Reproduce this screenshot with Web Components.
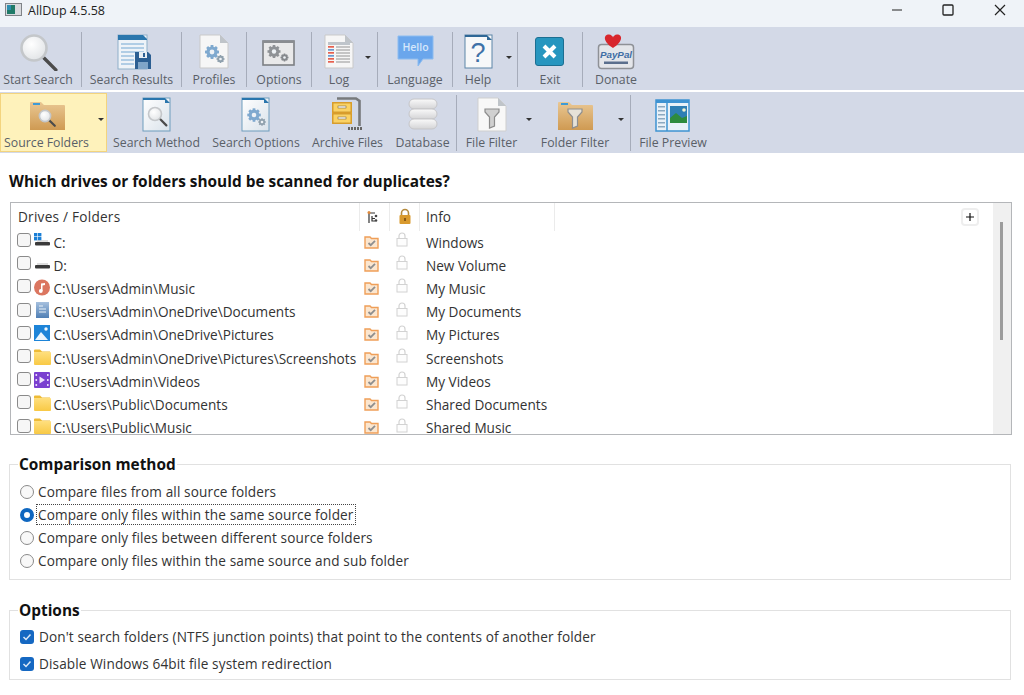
<!DOCTYPE html>
<html lang="en">
<head>
<meta charset="utf-8">
<title>AllDup 4.5.58</title>
<style>
html,body{margin:0;padding:0;background:#fff;overflow:hidden}
body{font-family:"Open Sans","Noto Sans",sans-serif;width:1024px;height:695px}
</style>
</head>
<body>
<app-titlebar>AllDup 4.5.58</app-titlebar>
<app-toolbar row="1">
  <tool-button w="76" style="margin-right:5px"><app-icon slot="icon" name="search"></app-icon>Start Search</tool-button>
  <tool-sep></tool-sep>
  <tool-button w="99"><app-icon slot="icon" name="results"></app-icon>Search Results</tool-button>
  <tool-sep></tool-sep>
  <tool-button w="64"><app-icon slot="icon" name="profiles"></app-icon>Profiles</tool-button>
  <tool-sep></tool-sep>
  <tool-button w="64"><app-icon slot="icon" name="options"></app-icon>Options</tool-button>
  <tool-sep></tool-sep>
  <tool-button w="65" shift="11" arrow="6"><app-icon slot="icon" name="log"></app-icon>Log</tool-button>
  <tool-sep></tool-sep>
  <tool-button w="74"><app-icon slot="icon" name="hello"></app-icon>Language</tool-button>
  <tool-sep></tool-sep>
  <tool-button w="64" shift="14" arrow="5"><app-icon slot="icon" name="help"></app-icon>Help</tool-button>
  <tool-sep></tool-sep>
  <tool-button w="64"><app-icon slot="icon" name="exit"></app-icon>Exit</tool-button>
  <tool-sep></tool-sep>
  <tool-button w="66"><app-icon slot="icon" name="paypal"></app-icon>Donate</tool-button>
</app-toolbar>
<app-toolbar row="2">
  <tool-button w="107" shift="14" arrow="3" active><app-icon slot="icon" name="folderSearch"></app-icon>Source Folders</tool-button>
  <tool-button w="99"><app-icon slot="icon" name="docSearch"></app-icon>Search Method</tool-button>
  <tool-button w="100"><app-icon slot="icon" name="docGears"></app-icon>Search Options</tool-button>
  <tool-button w="83"><app-icon slot="icon" name="archive"></app-icon>Archive Files</tool-button>
  <tool-button w="67"><app-icon slot="icon" name="database"></app-icon>Database</tool-button>
  <tool-sep></tool-sep>
  <tool-button w="78" shift="9" arrow="3"><app-icon slot="icon" name="fileFilter"></app-icon>File Filter</tool-button>
  <tool-button w="95" shift="15" arrow="6"><app-icon slot="icon" name="folderFilter"></app-icon>Folder Filter</tool-button>
  <tool-sep></tool-sep>
  <tool-button w="84"><app-icon slot="icon" name="preview"></app-icon>File Preview</tool-button>
</app-toolbar>
<app-main>
  <h-title>Which drives or folders should be scanned for duplicates?</h-title>
  <folder-list>
    <folder-row icon="driveWin" info="Windows">C:</folder-row>
    <folder-row icon="drive" info="New Volume">D:</folder-row>
    <folder-row icon="music" info="My Music">C:\Users\Admin\Music</folder-row>
    <folder-row icon="docs" info="My Documents">C:\Users\Admin\OneDrive\Documents</folder-row>
    <folder-row icon="pics" info="My Pictures">C:\Users\Admin\OneDrive\Pictures</folder-row>
    <folder-row icon="folder" info="Screenshots">C:\Users\Admin\OneDrive\Pictures\Screenshots</folder-row>
    <folder-row icon="video" info="My Videos">C:\Users\Admin\Videos</folder-row>
    <folder-row icon="folder" info="Shared Documents">C:\Users\Public\Documents</folder-row>
    <folder-row icon="folder" info="Shared Music">C:\Users\Public\Music</folder-row>
  </folder-list>
  <group-box legend="Comparison method" style="margin-top:18px;height:127px" pad="5">
    <radio-row>Compare files from all source folders</radio-row>
    <radio-row checked>Compare only files within the same source folder</radio-row>
    <radio-row>Compare only files between different source folders</radio-row>
    <radio-row>Compare only files within the same source and sub folder</radio-row>
  </group-box>
  <group-box legend="Options" style="margin-top:19px;height:81px" pad="2">
    <check-row>Don't search folders (NTFS junction points) that point to the contents of another folder</check-row>
    <check-row>Disable Windows 64bit file system redirection</check-row>
  </group-box>
</app-main>
<script>
const gear=(cx,cy,r,c)=>{let t='';for(let i=0;i<8;i++){const a=i*Math.PI/4;t+=`<line x1="${cx}" y1="${cy}" x2="${(cx+Math.cos(a)*r*1.25).toFixed(1)}" y2="${(cy+Math.sin(a)*r*1.25).toFixed(1)}" stroke="${c}" stroke-width="${(r*.5).toFixed(1)}"/>`}
return t+`<circle cx="${cx}" cy="${cy}" r="${r}" fill="${c}"/><circle cx="${cx}" cy="${cy}" r="${(r*.42).toFixed(1)}" fill="#eef2f6"/>`};
const page=(x,y,w,h,fill='#f6f6f6',stroke='#c9c9c9')=>`<path d="M${x} ${y}H${x+w-8}L${x+w} ${y+8}V${y+h}H${x}Z" fill="${fill}" stroke="${stroke}"/><path d="M${x+w-8} ${y}V${y+8}H${x+w}Z" fill="#bfc4c9"/>`;
const lens=(cx,cy,r,hl)=>`<line x1="${cx+r*.7}" y1="${cy+r*.7}" x2="${cx+r*1.75}" y2="${cy+r*1.75}" stroke="#4b4b4b" stroke-width="${hl||2.4}" stroke-linecap="round"/><circle cx="${cx}" cy="${cy}" r="${r}" fill="url(#lg)" stroke="#c4c7ca" stroke-width="${r>8?2.6:1.6}"/>`;
const folderShape=`<path d="M5 8a1 1 0 0 1 1-1h10l3 3h20a1 1 0 0 1 1 1v24H5Z" fill="url(#fo)"/><rect x="8" y="8" width="7" height="2" fill="#3e9bd6"/>`;
const funnel=(c,s)=>`<path d="M15 14H29V17L24.500 22V31L19.500 33V22L15 17Z" fill="${c}" stroke="${s}" stroke-width="1.200"/>`;
const ICONS={
 search:lens(18,17,12.5,3.4),
 results:`<rect x="8" y="4" width="29" height="34" fill="#eef3f8" stroke="#8fb0c9"/><path d="M8 4H33L37 8V9H8Z" fill="#2a76ad"/><g stroke="#9cc1de" stroke-width="1.6"><path d="M11 13H34M11 17H34M11 21H34M11 25H24M11 29H24M11 33H24"/></g><path d="M25 21H38L41 24V38H25Z" fill="#2c5f92"/><rect x="29" y="21" width="8" height="6" fill="#e8eef3"/><rect x="33" y="22" width="2" height="4" fill="#2c5f92"/><rect x="28" y="31" width="10" height="7" fill="#7fa5c8"/>`,
 profiles:page(8,4,28,33)+gear(20,21,5.6,'#7fa9cf')+gear(28.500,28,3.2,'#8fa0ad'),
 options:`<rect x="6" y="10" width="31" height="24" fill="#e9e9ea" stroke="#7c7f84" stroke-width="1.6"/><rect x="6" y="10" width="31" height="2" fill="#8a8d91"/>`+gear(17,20.500,5.2,'#8f9296')+gear(27.500,26.500,3.2,'#85888c'),
 log:page(8,4,28,33)+`<rect x="11" y="11" width="22" height="3" fill="#bfc5cb"/><g fill="#e7604e"><rect x="11" y="15" width="6" height="1.700"/><rect x="11" y="21" width="6" height="1.700"/><rect x="11" y="27" width="6" height="1.700"/><rect x="11" y="30" width="6" height="1.700"/></g><g fill="#6a9ad0"><rect x="11" y="18" width="6" height="1.700"/><rect x="11" y="24" width="6" height="1.700"/></g><g stroke="#b5b5b5" stroke-width="1.400"><path d="M19 16H33M19 19H33M19 22H33M19 25H33M19 28H33M19 31H33"/></g>`,
 hello:`<path d="M5 5H40V28H30L25 35V28H5Z" fill="#6aa6ec" stroke="#8cbcf0"/><text x="22.500" y="20" text-anchor="middle" fill="#d6e7fb" font-family="'Open Sans',sans-serif" font-weight="600" font-size="10.500">Hello</text>`,
 help:`<rect x="9" y="4" width="27" height="33" fill="#f7f8f9" stroke="#5c86a8"/><path d="M9 4H31L36 9H31V6H9Z" fill="#2f6796"/><text x="22" y="31" text-anchor="middle" fill="#3f72a8" font-family="'Liberation Sans',sans-serif" font-size="27">?</text>`,
 exit:`<rect x="7.500" y="6.500" width="28" height="28" rx="2.500" fill="#2796bf" stroke="#1c6f92"/><path d="M16 15L27 26M27 15L16 26" stroke="#fff" stroke-width="4"/>`,
 paypal:`<rect x="4.500" y="13.500" width="35" height="24" rx="3" fill="#e4e6ea" stroke="#8e9196" stroke-width="1.500"/><path d="M19 17C9 11 9 3.500 15 3.500C17 3.500 19 5.500 19 6.500C19 5.500 21 3.500 23 3.500C29 3.500 29 11 19 17Z" fill="#d8262c"/><text x="22" y="27" text-anchor="middle" fill="#3f6ea5" font-family="'Liberation Sans',sans-serif" font-style="italic" font-weight="700" font-size="9.800">PayPal</text><rect x="10" y="30.500" width="24" height="2.500" fill="#5b6f8d"/>`,
 folderSearch:folderShape+lens(20,21,5.600,2.2),
 docSearch:`<rect x="8" y="3" width="27" height="33" fill="url(#dc)" stroke="#6f9dbd"/><path d="M8 3H30L35 8H30V5H8Z" fill="#2a76ad"/>`+lens(20,19,6.500,2.2),
 docGears:`<rect x="8" y="3" width="27" height="33" fill="url(#dc)" stroke="#6f9dbd"/><path d="M8 3H30L35 8H30V5H8Z" fill="#2a76ad"/>`+gear(20,20,5.4,'#7fa9cf')+gear(28,27,3,'#8fa0ad'),
 archive:`<path d="M11 3.500H30L33.500 6V31" fill="none" stroke="#77797c" stroke-width="2.600"/><path d="M22 33.500H37" stroke="#666" stroke-width="3" stroke-dasharray="2 1"/><rect x="6" y="7" width="20" height="22" fill="#e3a52e"/><rect x="7" y="8" width="18" height="9" fill="#fbd264" stroke="#c8912a" stroke-width=".8"/><rect x="7" y="19" width="18" height="9" fill="#fbd264" stroke="#c8912a" stroke-width=".8"/><rect x="12" y="11" width="8" height="2" fill="#fff" stroke="#7a6a44" stroke-width=".6"/><rect x="12" y="22" width="8" height="2" fill="#fff" stroke="#7a6a44" stroke-width=".6"/>`,
 database:`<g fill="url(#db)" stroke="#c6c6c9"><rect x="8" y="4" width="28" height="10" rx="5"/><rect x="8" y="14" width="28" height="10" rx="5"/><rect x="8" y="24" width="28" height="10" rx="5"/></g>`,
 fileFilter:page(8,3,28,33,'#f8f8f8','#cfcfcf')+funnel('#d0d0d0','#8c8c8c'),
 folderFilter:folderShape+funnel('#e6e2d8','#8f8f8f'),
 preview:`<rect x="5" y="5" width="33" height="31" fill="#e9f1f8" stroke="#3e93d2" stroke-width="1.500"/><rect x="5" y="5" width="33" height="3" fill="#3e93d2"/><path d="M16 5V36" stroke="#3e93d2" stroke-width="1.500"/><g fill="#8ca9c0"><rect x="7" y="11" width="7" height="1.500"/><rect x="7" y="15" width="7" height="1.500"/><rect x="7" y="19" width="7" height="1.500"/><rect x="7" y="23" width="7" height="1.500"/><rect x="7" y="27" width="7" height="1.500"/><rect x="7" y="31" width="7" height="1.500"/></g><rect x="19" y="11" width="17" height="17" fill="#2f7fb4"/><path d="M19 23L25 18L31 23L36 21V28H19Z" fill="#2e8b3e"/><circle cx="33" cy="15" r="1.800" fill="#f2f2d0"/>`,
 driveWin:`<g fill="#1a7fd6"><rect x="1" y="0" width="3.400" height="3.400"/><rect x="5" y="0" width="3.400" height="3.400"/><rect x="1" y="4" width="3.400" height="3.400"/><rect x="5" y="4" width="3.400" height="3.400"/></g><rect x="2" y="9" width="15" height="3.500" rx="1" fill="#3a3a3a"/><path d="M4 8H15" stroke="#bdbdbd"/>`,
 drive:`<rect x="2" y="9" width="15" height="3.500" rx="1" fill="#3a3a3a"/><path d="M4 8H15" stroke="#bdbdbd"/>`,
 music:`<circle cx="9" cy="8.500" r="8" fill="#db7660"/><path d="M8 12V4.500L12 4V6L9.500 6.500V12" fill="#fff"/><circle cx="7.800" cy="12" r="1.900" fill="#fff"/>`,
 docs:`<rect x="3" y="0" width="13" height="16" fill="url(#dd)"/><g stroke="#eaf1f8" stroke-width="1.100"><path d="M6 4H10M6 7H13M6 10H13"/></g>`,
 pics:`<rect x="1" y="0" width="16" height="16" fill="#1d84d8"/><path d="M2 15L8 7L15 15Z" fill="#eaf5fd"/><circle cx="13" cy="4" r="1.700" fill="#f2f8fd"/>`,
 folder:`<path d="M1 1.500a1 1 0 0 1 1-1h5l2 2h8v1H1Z" fill="#eebb36"/><rect x="1" y="3" width="17" height="13" rx="1" fill="url(#fy)"/>`,
 video:`<rect x="1" y="0" width="16" height="16" rx="1" fill="#7a3fd0"/><path d="M6.500 4.500L12 8L6.500 11.500Z" fill="#eee2fb"/><g fill="#e6d8f8"><rect x="2.500" y="2" width="1.600" height="2"/><rect x="2.500" y="7" width="1.600" height="2"/><rect x="2.500" y="12" width="1.600" height="2"/><rect x="14" y="2" width="1.600" height="2"/><rect x="14" y="7" width="1.600" height="2"/><rect x="14" y="12" width="1.600" height="2"/></g>`
};
const DEFS=`<defs>
<radialGradient id="lg" cx=".4" cy=".35" r=".8"><stop offset="0" stop-color="#fff"/><stop offset="1" stop-color="#dcdfe2"/></radialGradient>
<linearGradient id="fo" x1="0" y1="0" x2="0" y2="1"><stop offset="0" stop-color="#e9c793"/><stop offset="1" stop-color="#cf9a52"/></linearGradient>
<linearGradient id="dc" x1="0" y1="0" x2="1" y2="1"><stop offset="0" stop-color="#fff"/><stop offset="1" stop-color="#d9e2ea"/></linearGradient>
<linearGradient id="db" x1="0" y1="0" x2="0" y2="1"><stop offset="0" stop-color="#fafafa"/><stop offset="1" stop-color="#d4d4d6"/></linearGradient>
<linearGradient id="dd" x1="0" y1="0" x2="0" y2="1"><stop offset="0" stop-color="#a6c0de"/><stop offset="1" stop-color="#4f7fb5"/></linearGradient>
<linearGradient id="fy" x1="0" y1="0" x2="0" y2="1"><stop offset="0" stop-color="#ffdf7e"/><stop offset="1" stop-color="#f8c945"/></linearGradient>
</defs>`;
class El extends HTMLElement{
  constructor(){super();this.attachShadow({mode:'open'})}
  connectedCallback(){this.shadowRoot.innerHTML=this.render()}
}
const def=(n,c)=>customElements.define(n,c);
def('app-icon',class extends El{render(){
  const n=this.getAttribute('name'),small=/^(drive|music|docs|pics|folder$|video)/.test(n);
  const[w,h]=small?[18,17]:[44,40];
  return `<style>:host{display:block;line-height:0;width:${w}px;height:${h}px}</style><svg width="${w}" height="${h}" viewBox="0 0 ${w} ${h}">${DEFS}${ICONS[n]}</svg>`;
}});
def('app-titlebar',class extends El{render(){return `<style>
:host{display:flex;align-items:flex-start;height:27px;background:#eff3f8;color:#1e1e1e;font-size:12.500px;box-sizing:border-box}
.ic{margin:3px 0 0 5px;width:17px;height:14px}
.t{margin-left:6px;line-height:21px}
.sp{flex:1}
.b{width:51px;height:20px;display:flex;align-items:center;justify-content:center;box-sizing:border-box}
</style><svg class="ic" viewBox="0 0 17 14"><rect x=".5" y=".5" width="16" height="12" fill="#d8dade" stroke="#7f8388"/><rect x="2" y="2" width="8" height="9" fill="#1f7a68"/><rect x="2" y="2" width="4" height="5" fill="#2d8fb0"/></svg><span class="t"><slot></slot></span><span class="sp"></span>
<span class="b"><svg width="12" height="12"><path d="M1 6H11" stroke="#222" stroke-width="1"/></svg></span>
<span class="b"><svg width="12" height="12"><rect x="1" y="1" width="10" height="10" rx="1" fill="none" stroke="#222" stroke-width="1.300"/></svg></span>
<span class="b" style="padding-left:2px"><svg width="14" height="14"><path d="M2 2L12 12M12 2L2 12" stroke="#222" stroke-width="1.200"/></svg></span>`}});
def('app-toolbar',class extends El{render(){const r=this.getAttribute('row');return `<style>
:host{display:flex;background:#d3d9e7;height:${r==1?63:61}px;box-sizing:border-box;
 ${r==2?'margin-top:2px;padding:1px 0;':'padding:4px 0 2px;'}
 --icon-gap:${r==1?1:0}px;--pt:${r==1?0:2}px;--sepm:${r==1?1:2}px}
</style><slot></slot>`}});
def('tool-sep',class extends El{render(){return `<style>:host{display:block;width:1px;flex:none;background:#a6acba;margin:var(--sepm) 0 1px}</style>`}});
def('tool-button',class extends El{render(){
  const w=this.getAttribute('w'),s=this.getAttribute('shift')||0,a=this.getAttribute('arrow'),act=this.hasAttribute('active');
  return `<style>
:host{display:flex;flex:none;flex-direction:column;align-items:center;position:relative;width:${w}px;box-sizing:border-box;padding-right:${s}px;padding-top:var(--pt);
 color:#5a6068;font-size:12.300px;white-space:nowrap;${act?'background:#fef2bb;box-shadow:inset 0 0 0 1px #f3d47e;':''}}
.l{line-height:16px;margin-top:var(--icon-gap)}
.a{position:absolute;right:${a}px;top:25px;width:0;height:0;border:3px solid transparent;border-top:3.500px solid #333;border-bottom:0}
::slotted(app-icon){flex:none}
</style><slot name="icon"></slot><span class="l"><slot></slot></span>${a!==null?'<i class="a"></i>':''}`}});
def('app-main',class extends El{render(){return `<style>:host{display:block;padding:19px 0 0 9px;width:1003px}</style><slot></slot>`}});
def('h-title',class extends El{render(){return `<style>:host{display:block;font-weight:700;font-size:15.400px;line-height:20px;color:#111}</style><slot></slot>`}});
def('folder-list',class extends El{render(){return `<style>
:host{display:block;margin:10px 0 0 1px;width:1002px;height:233px;box-sizing:border-box;border:1.500px solid #b4b6b9;position:relative;overflow:hidden;color:#333;font-size:13.600px}
.wrap{display:flex;height:100%}
.body{flex:1;min-width:0}
.sb{width:18px;background:#f0f0f0;display:flex;justify-content:center;padding:19px 1.500px 0 0;box-sizing:border-box}
.th{width:3px;height:118px;background:#9c9c9c}
.head{display:grid;grid-template-columns:349px 30px 30px 135px 1fr;height:27.500px;align-items:center}
.head>*{height:100%;display:flex;align-items:center;border-right:1px solid #ebebeb;box-sizing:border-box}
.head>:first-child{padding-left:7px;letter-spacing:.25px}
.head>:last-child{border:0;justify-content:flex-end;padding-right:16px}
.head>.c{justify-content:center}
.head .inf{padding-left:6px}
.plus{width:14px;height:14px;border-radius:2px;background:#fff;box-shadow:0 0 0 2px #eee;display:flex;align-items:center;justify-content:center}
.tree{margin-right:4px}
</style><div class="wrap"><div class="body"><div class="head">
<div>Drives / Folders</div>
<div class="c"><svg class="tree" width="14" height="14" viewBox="0 0 14 14"><path d="M3 3V13M3 3H9M6 6V11H9M6 8.500H9" stroke="#333" fill="none" stroke-width="1.200"/><circle cx="3" cy="2.500" r="1.500" fill="#e08a3c"/><circle cx="10" cy="6" r="1.300" fill="#444"/><circle cx="10" cy="10.500" r="1.300" fill="#444"/></svg></div>
<div class="c"><svg width="14" height="17" viewBox="0 0 14 17"><path d="M3.500 7V5a3.500 3.500 0 0 1 7 0V7" fill="none" stroke="#b58a3c" stroke-width="1.600"/><rect x="1.500" y="7" width="11" height="9" rx="1" fill="#d99a2e"/><rect x="6" y="10" width="2" height="3" fill="#8a5a18"/></svg></div>
<div class="inf">Info</div>
<div><span class="plus"><svg width="10" height="10"><path d="M5 1V9M1 5H9" stroke="#111" stroke-width="1.200"/></svg></span></div>
</div><slot></slot></div><div class="sb"><div class="th"></div></div></div>`}});
def('folder-row',class extends El{render(){
  const i=this.getAttribute('icon'),inf=this.getAttribute('info');
  return `<style>
:host{display:grid;grid-template-columns:349px 30px 30px 1fr;height:23.200px;align-items:center}
.n{display:flex;align-items:center;padding-left:5.500px;white-space:nowrap}
.cb{width:14px;height:14px;box-sizing:border-box;border:1.400px solid #8a8a8a;border-radius:3px;background:#f6f6f6;flex:none;margin-right:2.500px;margin-top:-4px}
app-icon{flex:none;margin-top:-2px;margin-right:2.500px}
.c{display:flex}
.f{padding-left:3.500px}
.k{padding-left:5.500px}
.inf{padding-left:6px}
</style><div class="n"><span class="cb"></span><app-icon name="${i}"></app-icon><span><slot></slot></span></div>
<div class="c f"><svg width="15" height="13" viewBox="0 0 15 13"><path d="M1 1H6L7.500 2.500H14V12H1Z" fill="#fbe6cf" stroke="#ef9f58" stroke-width="1.400"/><path d="M4.500 7L6.700 9.200L11 4.800" fill="none" stroke="#8f8f8f" stroke-width="1.800"/></svg></div>
<div class="c k"><svg width="12" height="15" viewBox="0 0 12 15" style="margin-top:-5px"><path d="M3 6V4a3 3 0 0 1 6 0V6" fill="none" stroke="#d2d2d2" stroke-width="1.200"/><rect x="1" y="6.500" width="10" height="7.500" fill="#fdfdfd" stroke="#d2d2d2"/></svg></div>
<div class="inf">${inf}</div>`}});
def('group-box',class extends El{render(){return `<style>
:host{display:block;width:1002px;box-sizing:border-box}
fieldset{margin:0;height:100%;box-sizing:border-box;border:1px solid #e1e1e1;padding:${this.getAttribute('pad')}px 0 0 10px;min-width:0}
legend{margin-left:-2px;padding:2px 1px 0;font-weight:700;font-size:15.400px;line-height:20px;color:#111}
</style><fieldset><legend>${this.getAttribute('legend')}</legend><slot></slot></fieldset>`}});
def('radio-row',class extends El{render(){const c=this.hasAttribute('checked');return `<style>
:host{display:flex;align-items:center;height:23px;font-size:13.600px;color:#333;letter-spacing:.12px;white-space:nowrap}
.r{width:14px;height:14px;box-sizing:border-box;border-radius:50%;flex:none;margin-right:4px;${c?'border:4px solid #0f67c0;background:#fff;':'border:1.400px solid #8a8a8a;background:#f8f8f8;'}}
.t{${c?'outline:1px dotted #444;outline-offset:1px;':''}line-height:17px}
</style><span class="r"></span><span class="t"><slot></slot></span>`}});
def('check-row',class extends El{render(){return `<style>
:host{display:flex;align-items:center;height:27px;font-size:13.600px;color:#333;letter-spacing:.12px;white-space:nowrap}
.b{width:14px;height:14px;background:#1568c2;border-radius:3px;flex:none;margin-right:5px;display:flex;align-items:center;justify-content:center}
</style><span class="b"><svg width="10" height="10"><path d="M1.500 5L4 7.500L8.500 2.500" fill="none" stroke="#dbe8f6" stroke-width="1.500"/></svg></span><span><slot></slot></span>`}});
</script>
</body>
</html>
